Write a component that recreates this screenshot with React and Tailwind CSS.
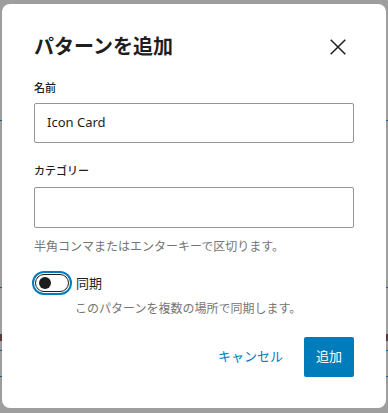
export default function App() {
  const font = { fontFamily: '"Noto Sans", "Noto Sans CJK JP", sans-serif' };
  return (
    <div className="relative w-[388px] h-[413px] overflow-hidden bg-[#9e9e9e]" style={font}>
      {/* faint page content behind the overlay */}
      <div className="absolute left-0 right-0 top-[120px] h-[1px] bg-[#1d5a82]" />
      <div className="absolute left-0 right-0 top-[287px] h-[1px] bg-[#1d5a82]" />
      <div className="absolute left-0 right-0 top-[334px] h-[7px] bg-[#5a3a3a]" />
      <div className="absolute left-0 right-0 top-[350px] h-[1px] bg-[#1d5a82]" />
      <div className="absolute left-0 right-0 top-[376px] h-[1px] bg-[#1d5a82]" />

      <div className="relative pt-[4px] pl-[2px]">
        <div className="w-[384px] h-[404px] bg-white rounded-[8px] px-[32px] text-[#1e1e1e]">
          <div className="flex items-center justify-between pt-[28px] h-[58px]">
            <h1 className="text-[20px] leading-[30px] font-semibold m-0">パターンを追加</h1>
            <svg className="mr-[8px]" width="16" height="16" viewBox="0 0 16 16">
              <path d="M0.7 0.7 L15.3 15.3 M15.3 0.7 L0.7 15.3" stroke="#1e1e1e" strokeWidth="1.5" fill="none" />
            </svg>
          </div>

          <div className="mt-[18px] text-[11px] leading-[16px] font-medium">名前</div>
          <div className="mt-[7px] h-[40px] border border-[#949494] rounded-[2px] flex items-center px-[12px] text-[13px]">
            Icon Card
          </div>

          <div className="mt-[20px] text-[11px] leading-[16px] font-medium">カテゴリー</div>
          <div className="mt-[8px] h-[41px] border border-[#949494] rounded-[2px]" />

          <div className="mt-[11px] text-[12px] leading-[16px] text-[#757575]">
            半角コンマまたはエンターキーで区切ります。
          </div>

          <div className="mt-[16px] flex items-center h-[24px] -ml-[2px]">
            <div className="w-[40px] h-[24px] rounded-full border-[2px] border-[#007cba] p-[1px] bg-white">
              <div className="w-full h-full rounded-full border border-[#1e1e1e] flex items-center pl-[3px]">
                <div className="w-[12px] h-[12px] rounded-full bg-[#1e1e1e]" />
              </div>
            </div>
            <span className="ml-[4px] text-[13px] leading-[20px]">同期</span>
          </div>
          <div className="mt-[6px] pl-[41px] text-[12px] leading-[16px] text-[#757575]">
            このパターンを複数の場所で同期します。
          </div>

          <div className="mt-[20px] flex justify-end items-center gap-[9px]">
            <button className="h-[40px] px-[12px] text-[13px] text-[#007cba] bg-transparent">キャンセル</button>
            <button className="h-[40px] px-[12px] text-[13px] text-white bg-[#007cba] rounded-[2px]">追加</button>
          </div>
        </div>
      </div>
    </div>
  );
}
